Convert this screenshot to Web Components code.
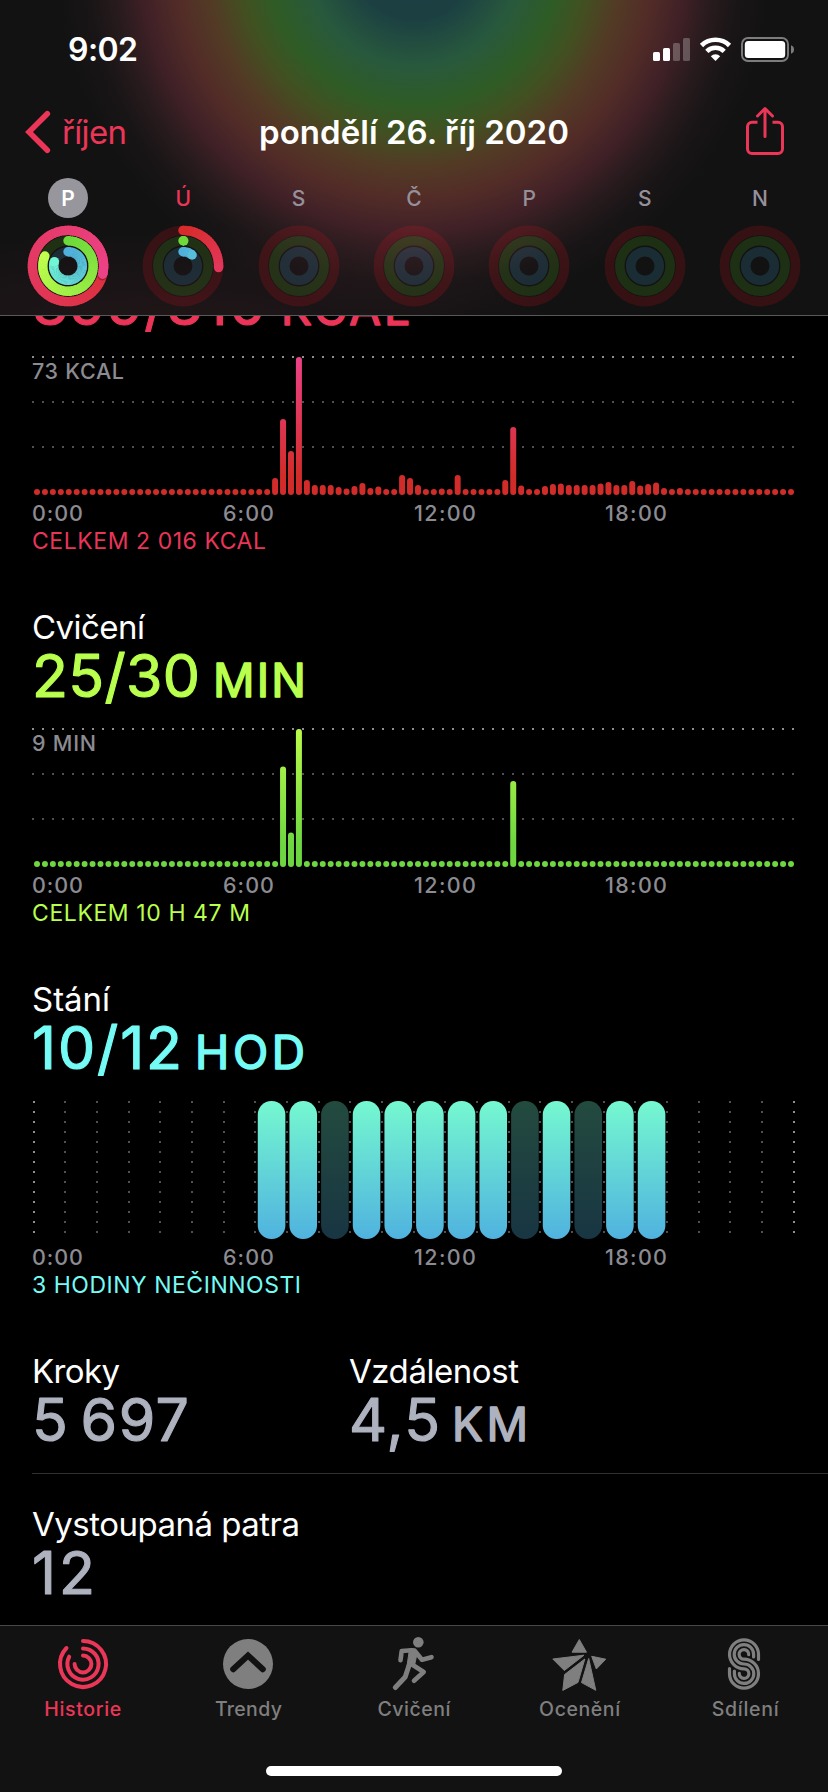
<!DOCTYPE html>
<html lang="cs">
<head>
<meta charset="utf-8">
<title>Aktivita</title>
<style>
  html, body {
    margin: 0;
    background: #000;
  }
  body {
    font-family: Inter, "Liberation Sans", sans-serif;
    color: #fff;
  }
</style>
</head>
<body>
<activity-app></activity-app>

<script>
// one line of text, tracked so that it fills the given width
class FitText extends HTMLElement {
  connectedCallback() {
    if (!this.shadowRoot) this.attachShadow({ mode: "open" });
    this.shadowRoot.innerHTML = `<style>
        :host { display: inline-block; white-space: nowrap; }
      </style><span><slot></slot></span>`;
    const span = this.shadowRoot.querySelector("span");
    const gaps = this.textContent.length - 1;
    const free = Number(this.getAttribute("width")) - span.getBoundingClientRect().width;
    if (gaps > 0) {
      span.style.letterSpacing = (free / gaps).toFixed(3) + "px";
      span.style.marginRight = (-free / gaps).toFixed(3) + "px";
    }
  }
}
customElements.define("fit-text", FitText);


class StatusBar extends HTMLElement {
  constructor() {
    super();
    this.attachShadow({ mode: "open" });
    this.shadowRoot.innerHTML = `
      <style>
        :host {
          display: flex;
          justify-content: space-between;
          box-sizing: border-box;
          height: 88px;
          padding: 30px 32px 0 68px;
          font-size: 32px;
          font-weight: 600;
          line-height: 39px;
        }
        svg { margin-top: 3px; }
      </style>
      <fit-text width="70">9:02</fit-text>
      <svg width="144" height="30" viewBox="652 33 144 30" fill="#fff">
        <rect x="653" y="52" width="7" height="9" rx="1.6"/>
        <rect x="663" y="48" width="7" height="13" rx="1.6"/>
        <rect x="673" y="43" width="7" height="18" rx="1.6" opacity=".25"/>
        <rect x="683" y="38" width="7" height="23" rx="1.6" opacity=".25"/>
        <g fill="none" stroke="#fff" stroke-width="4.6">
          <path d="M701.500 45.500A20 20 0 0 1 729.500 45.500"/>
          <path d="M706.800 51.300A12.500 12.500 0 0 1 724.200 51.300"/>
        </g>
        <path d="M715.500 61L710.800 56.200A6.800 6.800 0 0 1 720.200 56.200Z"/>
        <rect x="742" y="38" width="46" height="23" rx="6" fill="none" stroke="#fff" stroke-width="1.900" opacity=".45"/>
        <rect x="744.800" y="41" width="40.400" height="17" rx="3.500"/>
        <path d="M791 45.300Q794 46.300 794 49.500T791 53.700Z" opacity=".45"/>
      </svg>`;
  }
}
customElements.define("status-bar", StatusBar);


class NavBar extends HTMLElement {
  constructor() {
    super();
    this.attachShadow({ mode: "open" });
    this.shadowRoot.innerHTML = `
      <style>
        :host {
          display: grid;
          grid-template-columns: 200px 1fr 200px;
          align-items: center;
          height: 88px;
          font-size: 33px;
          line-height: 40px;
        }
        .back {
          display: flex;
          align-items: center;
          gap: 10px;
          padding-left: 24px;
          color: #eb3657;
        }
        .title {
          text-align: center;
          font-weight: 600;
        }
        .share {
          justify-self: end;
          padding-right: 40px;
        }
        svg { display: block; fill: none; stroke: #eb3657; stroke-linecap: round; stroke-linejoin: round; }
      </style>
      <div class="back">
        <svg width="28" height="46" viewBox="0 0 28 46"><path d="M23.300 4.800L5 23L23.300 41.200" stroke-width="5.600" stroke-linejoin="miter"/></svg>
        <fit-text width="65">říjen</fit-text>
      </div>
      <div class="title"><fit-text width="310">pondělí 26. říj 2020</fit-text></div>
      <svg class="share" width="46" height="54" viewBox="742 105 46 54" stroke-width="3">
        <path d="M757.500 122.200H752a4.500 4.500 0 0 0-4.500 4.500V149a4.500 4.500 0 0 0 4.500 4.500H778a4.500 4.500 0 0 0 4.500-4.500V126.700a4.500 4.500 0 0 0-4.500-4.500H772.500" stroke-linecap="butt"/>
        <path d="M765 136.500V109M757.500 116L765 108.500L772.500 116"/>
      </svg>`;
  }
}
customElements.define("nav-bar", NavBar);


const RINGS = {
  move: { r: 35.6, track: "rgba(235,18,30,.17)", from: [215, 44, 42], to: [236, 66, 136] },
  exercise: { r: 25.2, track: "rgba(93,205,30,.16)", from: [110, 217, 60], to: [192, 255, 78] },
  stand: { r: 14.3, track: "rgba(68,180,230,.16)", from: [80, 176, 220], to: [112, 245, 213] }
};

class DayRings extends HTMLElement {
  connectedCallback() {
    if (!this.shadowRoot) this.attachShadow({ mode: "open" });
    const state = this.getAttribute("state") || "";
    this.shadowRoot.innerHTML = `
      <style>
        :host {
          display: flex;
          flex-direction: column;
          align-items: center;
          gap: 6px;
        }
        .day {
          width: 40px;
          height: 40px;
          border-radius: 50%;
          text-align: center;
          font-size: 21px;
          font-weight: 500;
          line-height: 41px;
          color: #96909a;
        }
        .selected { background: #98969d; color: #fff; font-weight: 600; }
        .today { color: #eb3657; }
        svg { display: block; }
      </style>
      <div class="day ${state}">${this.getAttribute("day")}</div>
      <svg width="84" height="84" viewBox="-42 -42 84 84">${this.drawRings()}</svg>`;
  }

  drawRings() {
    const values = (this.getAttribute("values") || "0 0 0").split(" ").map(Number);
    return Object.keys(RINGS).map((key, i) => {
      const ring = RINGS[key];
      let out = `<circle r="${ring.r}" fill="none" stroke="${ring.track}" stroke-width="9.600"/>`;
      if (values[i]) out += this.drawArc(ring, values[i]);
      return out;
    }).join("");
  }

  // short segments, because SVG has no conic gradient
  drawArc(ring, value) {
    const steps = Math.max(4, Math.round(value * 90));
    const full = value > 0.5 ? value : 0.5;
    const point = t => {
      const a = t * Math.PI * 2;
      return (ring.r * Math.sin(a)).toFixed(2) + " " + (-ring.r * Math.cos(a)).toFixed(2);
    };
    const color = t => "rgb(" + ring.from.map((c, i) => Math.round(c + (ring.to[i] - c) * t / full)).join() + ")";
    const cap = (t, fill) => {
      const [x, y] = point(t).split(" ");
      return `<circle cx="${x}" cy="${y}" r="4.700" fill="${fill}"/>`;
    };
    let out = cap(0, color(0));
    for (let i = 0; i < steps; i++) {
      const a = value * i / steps;
      const b = value * (i + 1) / steps + (i < steps - 1 ? 0.004 : 0);
      out += `<path d="M${point(a)}A${ring.r} ${ring.r} 0 0 1 ${point(b)}" fill="none" stroke="${color(a)}" stroke-width="9.400"/>`;
      if (value > 1 && i === steps - 3) out += cap(value + 0.007, "rgba(60,0,10,.35)");
    }
    return out + cap(value, color(value));
  }
}
customElements.define("day-rings", DayRings);


class ActivityHeader extends HTMLElement {
  constructor() {
    super();
    this.attachShadow({ mode: "open" });
    this.shadowRoot.innerHTML = `
      <style>
        :host {
          display: block;
          box-sizing: border-box;
          height: 316px;
          border-bottom: 1px solid #58585a;
          background:
            radial-gradient(ellipse 420px 110px at 170px 335px, rgba(150,50,75,.12), transparent),
            radial-gradient(circle 370px at 414px -40px, #1a3c42 0, #1c4042 60px, #28593d 106px, #2f5c25 146px,
              #434f21 177px, #523b25 206px, #522c27 238px, #412127 270px, #291b1e 298px, #191516 326px, #121212 360px);
          background-color: #121212;
        }
        .week {
          display: grid;
          grid-template-columns: repeat(7, 1fr);
          padding: 2px 10.300px 0;
        }
      </style>
      <status-bar></status-bar>
      <nav-bar></nav-bar>
      <div class="week">
        <day-rings day="P" state="selected" values="1.287 .815 .8"></day-rings>
        <day-rings day="Ú" state="today" values=".257 .005 .11"></day-rings>
        <day-rings day="S"></day-rings>
        <day-rings day="Č"></day-rings>
        <day-rings day="P"></day-rings>
        <day-rings day="S"></day-rings>
        <day-rings day="N"></day-rings>
      </div>`;
  }
}
customElements.define("activity-header", ActivityHeader);


// name over a big rounded number, with an optional small unit
class MetricValue extends HTMLElement {
  connectedCallback() {
    if (!this.shadowRoot) this.attachShadow({ mode: "open" });
    const get = name => this.getAttribute(name);
    const [unit, unitX, unitWidth] = (get("unit") || "").split("|");
    this.shadowRoot.innerHTML = `
      <style>
        :host { display: block; }
        .name { height: 40px; font-size: 33px; line-height: 40px; }
        svg { display: block; overflow: visible; }
        text {
          fill: var(--accent, #aeb2bf);
          stroke: var(--accent, #aeb2bf);
          stroke-width: 1.100px;
          stroke-linejoin: round;
          font-size: 59px;
          font-weight: 400;
          word-spacing: -7px;
        }
        .unit { font-size: 46px; stroke-width: 1.500px; }
      </style>
      <div class="name">${get("name") ? `<fit-text width="${get("name-width")}">${get("name")}</fit-text>` : ""}</div>
      <svg width="400" height="64">
        <text x="0" y="49.500" textLength="${get("value-width")}">${get("value")}</text>
        ${unit ? `<text class="unit" x="${unitX}" y="49.500" textLength="${unitWidth}">${unit}</text>` : ""}
      </svg>`;
  }
}
customElements.define("metric-value", MetricValue);


class BarChart extends HTMLElement {
  connectedCallback() {
    if (!this.shadowRoot) this.attachShadow({ mode: "open" });
    const bars = {};
    this.getAttribute("bars").split(" ").forEach(item => {
      const [index, height] = item.split(":");
      bars[index] = Number(height);
    });
    let out = "";
    for (let i = 0; i < 96; i++) {
      const h = bars[i] || 6;
      out += `<rect x="${(2 + i * 7.937).toFixed(2)}" y="${140 - h}" width="6" height="${h}" rx="3"/>`;
    }
    this.shadowRoot.innerHTML = `
      <style>
        :host { display: block; height: 142px; }
        svg { display: block; }
        text { font-size: 21.500px; font-weight: 500; fill: #8b8b91; }
      </style>
      <svg width="764" height="142">
        <defs>
          <linearGradient id="g" gradientUnits="userSpaceOnUse" x1="0" y1="140" x2="0" y2="2">
            <stop offset=".15" stop-color="${this.getAttribute("low")}"/>
            <stop offset="1" stop-color="${this.getAttribute("high")}"/>
          </linearGradient>
        </defs>
        <g stroke-width="2" stroke-dasharray="2 8">
          <path d="M0 2H763" stroke="#8f8f8f"/>
          <path d="M0 47H763M0 92H763" stroke="#505050"/>
        </g>
        <text x="0" y="24" textLength="${this.getAttribute("peak-width")}">${this.getAttribute("peak")}</text>
        <g fill="url(#g)">${out}</g>
      </svg>`;
  }
}
customElements.define("bar-chart", BarChart);


class StandChart extends HTMLElement {
  connectedCallback() {
    if (!this.shadowRoot) this.attachShadow({ mode: "open" });
    const idle = [9, 15, 17];
    let lines = "";
    let hours = "";
    for (let i = 0; i <= 24; i++) {
      const x = Math.round(1.8 + i * 31.667);
      lines += `<path d="M${x} 2V134" stroke="${i % 24 ? "#505050" : "#8f8f8f"}"/>`;
    }
    for (let h = 7; h < 20; h++) {
      hours += `<rect x="${(4.1 + h * 31.667).toFixed(2)}" y="2" width="27.600" height="138" rx="13.600"${idle.includes(h) ? ' opacity=".3"' : ""}/>`;
    }
    this.shadowRoot.innerHTML = `
      <style>
        :host { display: block; height: 142px; }
        svg { display: block; }
      </style>
      <svg width="764" height="142">
        <defs>
          <linearGradient id="g" gradientUnits="userSpaceOnUse" x1="0" y1="2" x2="0" y2="140">
            <stop offset="0" stop-color="#75f8d0"/>
            <stop offset="1" stop-color="#50b2df"/>
          </linearGradient>
        </defs>
        <g stroke-width="2" stroke-dasharray="2 8">${lines}</g>
        <g fill="url(#g)">${hours}</g>
      </svg>`;
  }
}
customElements.define("stand-chart", StandChart);


// value, slotted chart, time axis and summary line
class ActivitySection extends HTMLElement {
  connectedCallback() {
    if (!this.shadowRoot) this.attachShadow({ mode: "open" });
    const get = name => this.getAttribute(name) || "";
    this.shadowRoot.innerHTML = `
      <style>
        :host {
          display: block;
          box-sizing: border-box;
          height: 372px;
          padding-left: 32px;
          --accent: ${get("accent")};
        }
        ::slotted(*) { margin-top: 16px; }
        .axis {
          display: grid;
          grid-template-columns: repeat(4, 191px);
          margin-top: 2px;
          height: 28px;
          color: #8b8b91;
          font-size: 21.500px;
          font-weight: 500;
          line-height: 28px;
        }
        .total {
          color: var(--accent);
          font-size: 23px;
          line-height: 28px;
        }
      </style>
      <metric-value name="${get("name")}" name-width="${get("name-width")}" value="${get("value")}"
        value-width="${get("value-width")}" unit="${get("unit")}"></metric-value>
      <slot></slot>
      <div class="axis">
        <fit-text width="51">0:00</fit-text>
        <fit-text width="51">6:00</fit-text>
        <fit-text width="62">12:00</fit-text>
        <fit-text width="62">18:00</fit-text>
      </div>
      <div class="total"><fit-text width="${get("total-width")}">${get("total")}</fit-text></div>`;
  }
}
customElements.define("activity-section", ActivitySection);


const ICONS = {
  rings: `<g fill="none" stroke="currentColor" stroke-width="4" stroke-linecap="round">
      <path d="M30 7A23 23 0 1 1 13.500 14"/>
      <path d="M30 14.400A15.600 15.600 0 1 1 16.200 22.700"/>
      <path d="M30 21.600A8.400 8.400 0 1 1 21.600 30"/>
    </g>`,
  trends: `<circle cx="30" cy="30" r="25" fill="currentColor"/>
    <path d="M15.200 35.200L30 21.500L44.800 35.200" fill="none" stroke="#121212" stroke-width="6" stroke-linecap="round"/>`,
  runner: `<circle cx="34.300" cy="8.200" r="5.300" fill="currentColor"/>
    <g fill="none" stroke="currentColor" stroke-width="4.600" stroke-linecap="round" stroke-linejoin="round">
      <path d="M16.500 26.300L17.700 17L28 16.200"/>
      <path d="M31.500 17.800L38 25.800L47.500 23.200"/>
      <path d="M25 31.500L21.200 43L11.300 53.500" stroke-width="5"/>
      <path d="M28 30.500L39.700 38L30 46.800"/>
    </g>
    <path d="M25.500 14.800H31.500L33.300 18.500L30.500 31.500L22.800 33.500Z" fill="currentColor" stroke="currentColor" stroke-linejoin="round"/>`,
  star: `<g fill="currentColor" stroke="currentColor" stroke-linejoin="round">
      <path d="M29.300 5.500L36.500 18.200H22Z"/>
      <path d="M2.800 25L34 21.200L14.300 36.500Z"/>
      <path d="M34.800 25L28 48.400L12.800 56.400L14.600 40.500Z"/>
      <path d="M38.700 24.500L45.800 56.300L31.500 48.600Z"/>
      <path d="M41.700 22.300L55.800 25.200L46.300 35Z"/>
    </g>`,
  sharing: `<g fill="none" stroke="currentColor" stroke-width="3.200" stroke-linecap="round" transform="translate(-1 0)">
      <path d="M44.500 25.500V20.300A14.500 14.500 0 1 0 30 34.800A4.800 4.800 0 1 1 25.300 39.300"/>
      <path d="M39.600 23V20.300A9.700 9.700 0 1 0 30 30A9.700 9.700 0 1 1 20.400 39.700V37"/>
      <path d="M34.700 20.700A4.800 4.800 0 1 0 30 25.200A14.500 14.500 0 1 1 15.500 39.700V34.500"/>
    </g>`
};

class TabItem extends HTMLElement {
  connectedCallback() {
    if (!this.shadowRoot) this.attachShadow({ mode: "open" });
    this.shadowRoot.innerHTML = `
      <style>
        :host {
          display: flex;
          flex-direction: column;
          align-items: center;
          padding-top: 8px;
          color: #7f7f7f;
          font-size: 19.500px;
          font-weight: 500;
          line-height: 30px;
        }
        :host([active]) { color: #eb3657; }
        svg { display: block; }
      </style>
      <svg width="60" height="60" viewBox="0 0 60 60">${ICONS[this.getAttribute("icon")]}</svg>
      <fit-text width="${this.getAttribute("label-width")}">${this.getAttribute("label")}</fit-text>`;
  }
}
customElements.define("tab-item", TabItem);


class TabBar extends HTMLElement {
  constructor() {
    super();
    this.attachShadow({ mode: "open" });
    this.shadowRoot.innerHTML = `
      <style>
        :host {
          display: flex;
          flex-direction: column;
          align-items: center;
          justify-content: space-between;
          box-sizing: border-box;
          height: 167px;
          padding-bottom: 16px;
          border-top: 1px solid #48484a;
          background: #121212;
        }
        .tabs {
          display: grid;
          grid-template-columns: repeat(5, 1fr);
          width: 100%;
        }
        .home {
          width: 296px;
          height: 10px;
          border-radius: 5px;
          background: #fff;
        }
      </style>
      <div class="tabs">
        <tab-item icon="rings" label="Historie" label-width="77" active></tab-item>
        <tab-item icon="trends" label="Trendy" label-width="67"></tab-item>
        <tab-item icon="runner" label="Cvičení" label-width="73"></tab-item>
        <tab-item icon="star" label="Ocenění" label-width="81"></tab-item>
        <tab-item icon="sharing" label="Sdílení" label-width="67"></tab-item>
      </div>
      <div class="home"></div>`;
  }
}
customElements.define("tab-bar", TabBar);


class ActivityApp extends HTMLElement {
  constructor() {
    super();
    this.attachShadow({ mode: "open" });
    this.shadowRoot.innerHTML = `
      <style>
        :host {
          display: flex;
          flex-direction: column;
          width: 828px;
          height: 1792px;
          overflow: hidden;
        }
        main {
          flex: 1;
          min-height: 0;
          overflow: hidden;
        }
        .scrolled { margin-top: -81px; }
        .row {
          display: grid;
          grid-template-columns: 317px 1fr;
          box-sizing: border-box;
          height: 123px;
          margin-left: 32px;
          border-bottom: 1px solid #303032;
        }
        .row + .row { padding-top: 30px; border: 0; }
      </style>
      <activity-header></activity-header>
      <main>
        <div class="scrolled">
          <activity-section accent="#ea3558" value="399/310" value-width="234"
            unit="KCAL|249|129" total="CELKEM 2 016 KCAL" total-width="234">
            <bar-chart low="#d22c2a" high="#ed4288" peak="73 KCAL" peak-width="92"
              bars="30:17 31:76 32:44 33:138 34:15 35:10 36:10 37:10 38:8 39:6.5 40:9 41:12 42:7 43:8.5 46:20 47:17 48:10 51:6.5 53:20 59:15 60:68 61:9.5 64:9 65:11 66:11.5 67:10 68:10 69:10 70:10 71:11.5 72:13 73:10 74:10 75:14 76:9.5 77:11 78:12.5 79:7 81:7"></bar-chart>
          </activity-section>
          <activity-section accent="#b9ff4d" name="Cvičení" name-width="113" value="25/30" value-width="168"
            unit="MIN|181|93" total="CELKEM 10 H 47 M" total-width="218">
            <bar-chart low="#6dd640" high="#bcfb4a" peak="9 MIN" peak-width="64"
              bars="31:100.500 32:34.500 33:138 60:86"></bar-chart>
          </activity-section>
          <activity-section accent="#75fbf5" name="Stání" name-width="78" value="10/12" value-width="150"
            unit="HOD|163|110" total="3 HODINY NEČINNOSTI" total-width="269">
            <stand-chart></stand-chart>
          </activity-section>
          <div class="row">
            <metric-value name="Kroky" name-width="88" value="5 697" value-width="157"></metric-value>
            <metric-value name="Vzdálenost" name-width="170" value="4,5" value-width="91" unit="KM|103|76"></metric-value>
          </div>
          <div class="row">
            <metric-value name="Vystoupaná patra" name-width="268" value="12" value-width="63"></metric-value>
          </div>
        </div>
      </main>
      <tab-bar></tab-bar>`;
  }
}
customElements.define("activity-app", ActivityApp);
</script>
</body>
</html>
